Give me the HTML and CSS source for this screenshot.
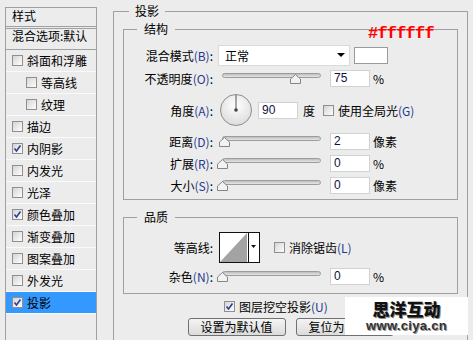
FILE: index.html
```html
<!DOCTYPE html>
<html lang="zh-CN">
<head>
  <meta charset="UTF-8" />
  <meta name="viewport" content="width=device-width, initial-scale=1.0"/>
  <title>图层样式 - 投影</title>
  <link rel="stylesheet" href="styles.css">
</head>
<body>
  <div class="dialog">
    <!-- left: list of layer effects -->
    <div class="style-list">
      <div class="list-title">样式</div>
      <div class="list-blend">混合选项:默认</div>
      <ul class="fx-list">
        <li><span class="cb"></span>斜面和浮雕</li>
        <li class="sub"><span class="cb"></span>等高线</li>
        <li class="sub"><span class="cb"></span>纹理</li>
        <li><span class="cb"></span>描边</li>
        <li><span class="cb"><svg viewBox="0 0 11 11"><path d="M2.5 5.5 L4.5 8 L8.5 2.5"/></svg></span>内阴影</li>
        <li><span class="cb"></span>内发光</li>
        <li><span class="cb"></span>光泽</li>
        <li><span class="cb"><svg viewBox="0 0 11 11"><path d="M2.5 5.5 L4.5 8 L8.5 2.5"/></svg></span>颜色叠加</li>
        <li><span class="cb"></span>渐变叠加</li>
        <li><span class="cb"></span>图案叠加</li>
        <li><span class="cb"></span>外发光</li>
        <li class="active"><span class="cb"><svg viewBox="0 0 11 11"><path d="M2.5 5.5 L4.5 8 L8.5 2.5"/></svg></span>投影</li>
      </ul>
    </div>

    <!-- right: drop shadow settings -->
    <fieldset class="panel">
      <legend>投影</legend>

      <fieldset class="group group-structure">
        <legend>结构</legend>
        <div class="row row-blend">
          <span class="lbl">混合模式<span class="key">(B)</span>:</span>
          <div class="select">正常<span class="caret"></span></div>
          <span class="swatch"></span>
        </div>
        <div class="row row-opacity">
          <span class="lbl">不透明度<span class="key">(O)</span>:</span>
          <div class="slider"><span class="track"></span><svg class="thumb" style="left:68px" viewBox="0 0 11 10"><polygon points="0.5,9.5 0.5,5 5.5,0.5 10.5,5 10.5,9.5"/></svg></div>
          <div class="num">75</div>
          <span class="unit">%</span>
        </div>
        <div class="row row-angle">
          <span class="lbl">角度<span class="key">(A)</span>:</span>
          <svg class="dial" width="32" height="32" viewBox="0 0 32 32">
            <defs>
              <radialGradient id="dialFill" cx="50%" cy="35%" r="65%">
                <stop offset="0" stop-color="#ffffff"/>
                <stop offset="1" stop-color="#dcdcdc"/>
              </radialGradient>
            </defs>
            <circle cx="16" cy="16" r="15.5" fill="url(#dialFill)" stroke="#8e8e8e"/>
            <line x1="16" y1="16" x2="16" y2="1" stroke="#555"/>
            <circle cx="16" cy="16" r="1.8" fill="#444"/>
          </svg>
          <div class="num num-angle">90</div>
          <span class="unit unit-deg">度</span>
          <span class="cb cb-global"></span>
          <span>使用全局光<span class="key">(G)</span></span>
        </div>
        <div class="row">
          <span class="lbl">距离<span class="key">(D)</span>:</span>
          <div class="slider"><span class="track"></span><svg class="thumb" style="left:-3px" viewBox="0 0 11 10"><polygon points="0.5,9.5 0.5,5 5.5,0.5 10.5,5 10.5,9.5"/></svg></div>
          <div class="num">2</div>
          <span class="unit">像素</span>
        </div>
        <div class="row">
          <span class="lbl">扩展<span class="key">(R)</span>:</span>
          <div class="slider"><span class="track"></span><svg class="thumb" style="left:-5px" viewBox="0 0 11 10"><polygon points="0.5,9.5 0.5,5 5.5,0.5 10.5,5 10.5,9.5"/></svg></div>
          <div class="num">0</div>
          <span class="unit">%</span>
        </div>
        <div class="row">
          <span class="lbl">大小<span class="key">(S)</span>:</span>
          <div class="slider"><span class="track"></span><svg class="thumb" style="left:-5px" viewBox="0 0 11 10"><polygon points="0.5,9.5 0.5,5 5.5,0.5 10.5,5 10.5,9.5"/></svg></div>
          <div class="num">0</div>
          <span class="unit">像素</span>
        </div>
      </fieldset>

      <fieldset class="group group-quality">
        <legend>品质</legend>
        <div class="row row-contour">
          <span class="lbl">等高线:</span>
          <svg class="contour" width="41" height="31" viewBox="0 0 41 31">
            <rect x="0.5" y="0.5" width="40" height="30" fill="#fff" stroke="#111"/>
            <polygon points="1,30 28,1 28,30" fill="#a3a3a3"/>
            <line x1="29.5" y1="1" x2="29.5" y2="30" stroke="#111"/>
            <polygon points="32,13 37,13 34.5,16" fill="#111"/>
          </svg>
          <span class="cb cb-smooth"></span>
          <span>消除锯齿<span class="key">(L)</span></span>
        </div>
        <div class="row">
          <span class="lbl">杂色<span class="key">(N)</span>:</span>
          <div class="slider"><span class="track"></span><svg class="thumb" style="left:-5px" viewBox="0 0 11 10"><polygon points="0.5,9.5 0.5,5 5.5,0.5 10.5,5 10.5,9.5"/></svg></div>
          <div class="num">0</div>
          <span class="unit">%</span>
        </div>
      </fieldset>

      <div class="knockout">
        <span class="cb"><svg viewBox="0 0 11 11"><path d="M2.5 5.5 L4.5 8 L8.5 2.5"/></svg></span>
        <span>图层挖空投影<span class="key">(U)</span></span>
      </div>
      <div class="buttons">
        <button>设置为默认值</button>
        <button>复位为默认值</button>
      </div>
    </fieldset>
  </div>

  <div class="note">#ffffff</div>
  <div class="watermark">
    <div class="wm-name">思洋互动</div>
    <div class="wm-url">www.ciya.cn</div>
  </div>
</body>
</html>
```

FILE: styles.css
```css
body {
  margin: 0;
  background: #ececec;
  font-family: "Noto Sans CJK SC", "Noto Sans", sans-serif;
  font-size: 12px;
  color: #000;
  overflow: hidden;
  height: 340px;
  position: relative;
}
.dialog {
  display: flex;
  align-items: flex-start;
}

/* effects list */
.style-list {
  margin: 7px 0 0 5px;
  width: 92px;
  height: 333px;
  box-sizing: border-box;
  border: 1px solid #a0a0a0;
  border-bottom: none;
}
.list-title {
  height: 21px;
  padding: 2px 0 0 6px;
  box-sizing: border-box;
  line-height: 12px;
  border-bottom: 3px double #a0a0a0;
}
.list-blend {
  height: 21px;
  padding: 1px 0 0 6px;
  box-sizing: border-box;
  line-height: 12px;
  border-bottom: 1px solid #a0a0a0;
  white-space: nowrap;
}
.fx-list {
  list-style: none;
  margin: 0;
  padding: 0;
}
.fx-list li {
  height: 21px;
  border-bottom: 1px solid #fafafa;
  display: flex;
  align-items: center;
  padding-left: 6px;
}
.fx-list li.sub {
  padding-left: 20px;
}
.fx-list li.active {
  background: #3399ff;
}
.fx-list .cb {
  margin-right: 4px;
}

/* checkbox */
.cb {
  display: inline-block;
  width: 11px;
  height: 11px;
  box-sizing: border-box;
  border: 1px solid #8f8f8f;
  background: linear-gradient(135deg, #d4d4d4 0%, #ececec 55%, #fdfdfd 100%);
  flex: none;
}
.cb svg {
  display: block;
  width: 11px;
  height: 11px;
  margin: -1px;
}
.cb svg path {
  fill: none;
  stroke: #2c3f96;
  stroke-width: 1.6;
}

/* fieldsets */
fieldset {
  margin: 0;
  padding: 0;
  border: 1px solid #a0a0a0;
  min-width: 0;
}
legend {
  line-height: 16px;
  padding: 0 6px;
}
.panel {
  margin: 3px 0 0 16px;
  width: 355px;
  height: 337px;
  box-sizing: border-box;
  border-bottom: none;
}
.panel > legend {
  margin-left: 15px;
}
.group {
  margin-left: 9px;
  width: 335px;
  box-sizing: border-box;
}
.group > legend {
  margin-left: 13px;
  padding: 0 7px;
}
.group-structure {
  margin-top: 2px;
  padding: 6px 0 3px;
}
.group-quality {
  margin-top: 9px;
  padding: 7px 0 6px;
}

/* rows */
.row {
  display: flex;
  align-items: center;
  height: 22px;
  white-space: nowrap;
}
.row-blend { height: 24px; }
.row-opacity { height: 23px; }
.row-angle { height: 40px; }
.row-contour { height: 31px; margin-bottom: 2px; }
.lbl {
  width: 89px;
  text-align: right;
  flex: none;
}
.key {
  color: #1f3a8f;
}

.select {
  margin-left: 5px;
  width: 132px;
  height: 21px;
  box-sizing: border-box;
  background: #fff;
  border: 1px solid #dadada;
  padding-left: 6px;
  line-height: 19px;
  display: flex;
  justify-content: space-between;
  align-items: center;
}
.caret {
  width: 0;
  height: 0;
  border-left: 4px solid transparent;
  border-right: 4px solid transparent;
  border-top: 4px solid #000;
  margin-right: 4px;
}
.swatch {
  margin-left: 4px;
  width: 34px;
  height: 17px;
  box-sizing: border-box;
  background: #fff;
  border: 1px solid #9a9a9a;
}

.slider {
  margin-left: 9px;
  width: 99px;
  height: 11px;
  position: relative;
  flex: none;
}
.track {
  display: block;
  height: 5px;
  box-sizing: border-box;
  border: 1px solid #9c9c9c;
  border-radius: 3px;
  background: linear-gradient(#bdbdbd, #e6e6e6);
}
.thumb {
  position: absolute;
  top: 1px;
  width: 11px;
  height: 10px;
}
.thumb polygon {
  fill: #f2f2f2;
  stroke: #858585;
}

.num {
  margin-left: 9px;
  width: 40px;
  height: 17px;
  box-sizing: border-box;
  background: #fff;
  border: 1px solid #d2d2d2;
  padding-left: 3px;
  font-family: "Liberation Sans", sans-serif;
  font-size: 12px;
  line-height: 15px;
  color: #101040;
}
.unit {
  margin-left: 3px;
}
.dial {
  margin-left: 7px;
  flex: none;
}
.num-angle {
  margin-left: 6px;
}
.unit-deg {
  margin-left: 5px;
}
.cb-global {
  margin: 0 4px 0 8px;
}

.contour {
  margin-left: 6px;
  flex: none;
}
.cb-smooth {
  margin: 0 4px 0 14px;
}

.knockout {
  margin: 3px 0 0 110px;
  height: 18px;
  display: flex;
  align-items: center;
}
.knockout .cb {
  margin-right: 4px;
}
.buttons {
  margin-top: 3px;
  display: flex;
  justify-content: center;
  gap: 10px;
}
button {
  width: 98px;
  height: 18px;
  padding: 0;
  font-family: inherit;
  font-size: 12px;
  line-height: 16px;
  color: #000;
  border: 1px solid #707070;
  border-radius: 3px;
  background: linear-gradient(#f4f4f4, #dcdcdc);
}

/* overlays on the screenshot */
.note {
  position: absolute;
  left: 368px;
  top: 24px;
  font-family: "Liberation Mono", monospace;
  font-weight: bold;
  font-size: 17px;
  letter-spacing: -0.8px;
  color: #ff0000;
}
.watermark {
  position: absolute;
  left: 345px;
  top: 297px;
  width: 123px;
  height: 38px;
  background: #fff;
  text-align: center;
}
.wm-name {
  margin-top: 3px;
  font-size: 17px;
  font-weight: 900;
  line-height: 18px;
  color: #111;
  text-shadow: 1px 1px 0 #888;
}
.wm-url {
  margin-top: 1px;
  font-family: "Liberation Sans", sans-serif;
  font-size: 13px;
  font-weight: bold;
  line-height: 13px;
  letter-spacing: 0.3px;
  color: #333;
  text-shadow: 1px 1px 0 #999;
}
```
